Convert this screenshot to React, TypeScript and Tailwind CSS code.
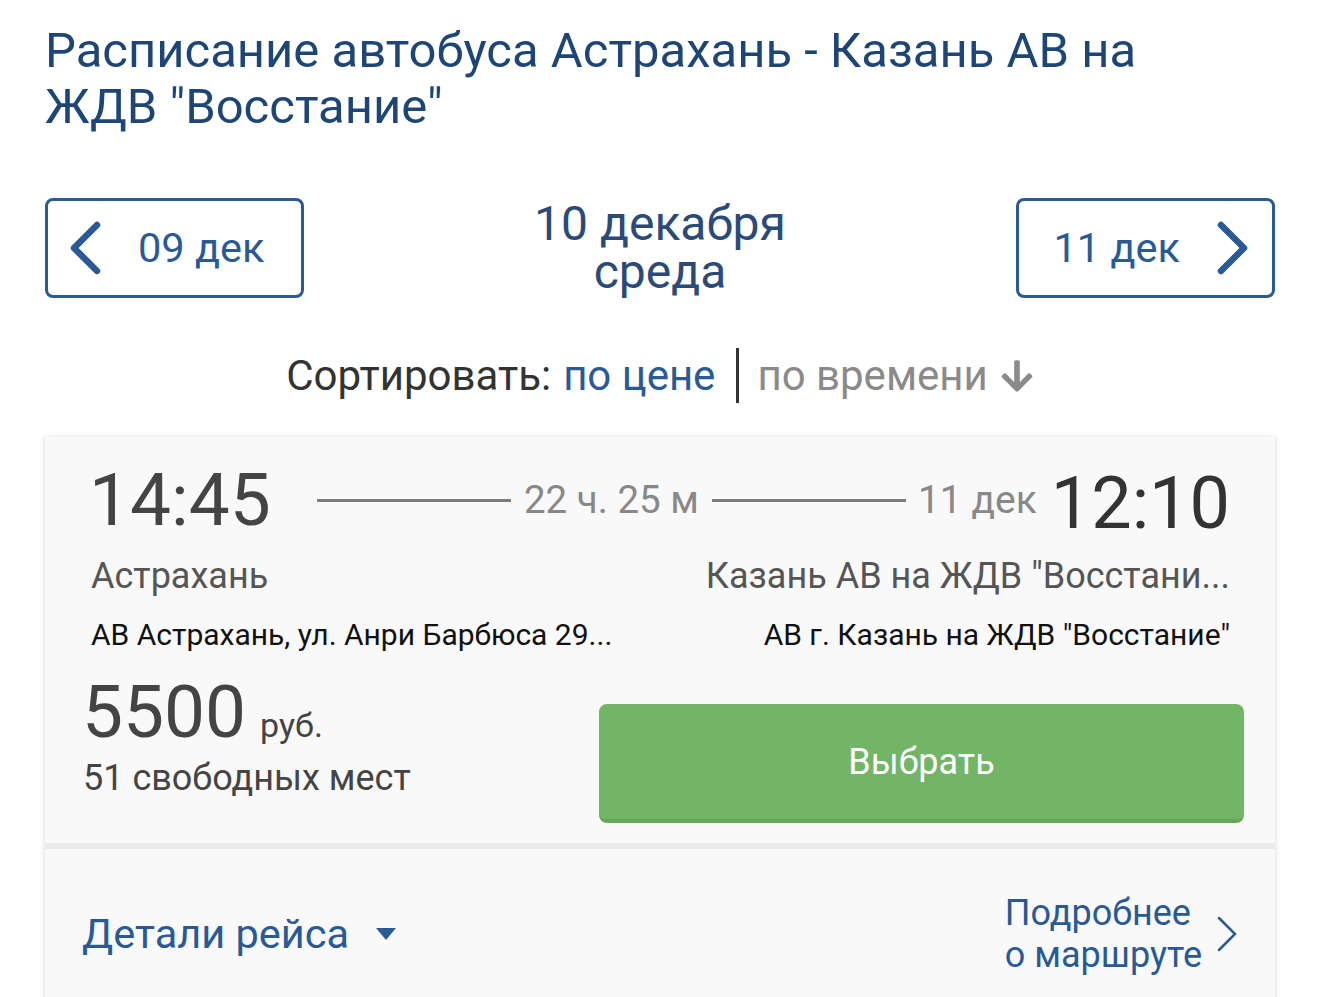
const roboto = { fontFamily: "Roboto, 'Noto Sans', sans-serif" };

function ArrowDown() {
  return (
    <svg viewBox="0 0 448 512" className="w-[34px] h-[36px] fill-[#8a8a8a] ml-[12px]">
      <path d="M413.1 222.5l22.2 22.2c9.4 9.4 9.4 24.6 0 33.9L241 473c-9.4 9.4-24.6 9.4-33.9 0L12.7 278.6c-9.4-9.4-9.4-24.6 0-33.9l22.2-22.2c9.5-9.5 25-9.3 34.3.4L184 343.4V56c0-13.3 10.7-24 24-24h32c13.3 0 24 10.7 24 24v287.4l114.8-120.5c9.3-9.8 24.8-10 34.3-.4z" />
    </svg>
  );
}

function BigChevron({ dir }: { dir: "left" | "right" }) {
  return (
    <svg viewBox="0 0 34 54" className="w-[34px] h-[54px]" fill="none" stroke="#2a5a96" strokeWidth={6.5} strokeLinecap="round" strokeLinejoin="round">
      {dir === "left" ? <polyline points="29,4 6,27 29,50" /> : <polyline points="5,4 28,27 5,50" />}
    </svg>
  );
}

export default function App() {
  return (
    <div className="min-h-screen bg-white px-[45px] pt-[23px] overflow-hidden" style={roboto}>
      <h1 className="max-w-[1170px] text-[49px] leading-[56px] text-[#1d4677] font-normal">
        Расписание автобуса Астрахань - Казань АВ на ЖДВ "Восстание"
      </h1>

      {/* date switcher */}
      <div className="flex items-center justify-between mt-[63px]">
        <button className="w-[259px] h-[100px] border-[3px] border-[#2a5a96] rounded-[8px] flex items-center pl-[20px] text-[#2a5a96]">
          <BigChevron dir="left" />
          <span className="text-[41.5px] ml-[36px]">09 дек</span>
        </button>
        <div className="text-center text-[#2b4a78] text-[48px] leading-[48px]">
          <div>10 декабря</div>
          <div>среда</div>
        </div>
        <button className="w-[259px] h-[100px] border-[3px] border-[#2a5a96] rounded-[8px] flex items-center justify-end pr-[22px] text-[#2a5a96]">
          <span className="text-[41.5px] mr-[36px]">11 дек</span>
          <BigChevron dir="right" />
        </button>
      </div>

      {/* sort */}
      <div className="flex items-center justify-center mt-[50px] h-[55px] text-[42px] leading-[55px]">
        <span className="text-[#333]">Сортировать:</span>
        <span className="text-[#2a5a96] ml-[12px]">по цене</span>
        <span className="w-[3px] h-[55px] bg-[#333] ml-[21px] mr-[18px]" />
        <span className="text-[#8a8a8a]">по времени</span>
        <ArrowDown />
      </div>

      {/* trip card */}
      <div className="mt-[34px] bg-[#f9f9f9] shadow-[0_1px_6px_rgba(0,0,0,0.16)]">
        <div className="pl-[46px] pr-[45px] pt-[26px] pb-[20px]">
          <div className="flex items-center h-[74px]">
            <span className="text-[73px] leading-[74px] text-[#444] -ml-[2px]">14:45</span>
            <span className="flex-1 h-[3px] bg-[#7d7d7d] ml-[46px]" />
            <span className="text-[38.5px] text-[#888] mx-[13px]">22 ч. 25 м</span>
            <span className="flex-1 h-[3px] bg-[#7d7d7d]" />
            <span className="text-[39px] text-[#888] ml-[12px] mr-[14px]">11 дек</span>
            <span className="text-[72px] leading-[74px] text-[#333] pt-[8px]">12:10</span>
          </div>
          <div className="flex justify-between mt-[19px] text-[36px] leading-[40px] text-[#555]">
            <span className="whitespace-nowrap">Астрахань</span>
            <span className="whitespace-nowrap">Казань АВ на ЖДВ "Восстани...</span>
          </div>
          <div className="flex justify-between mt-[22px] text-[30px] leading-[34px] text-[#111]">
            <span className="whitespace-nowrap">АВ Астрахань, ул. Анри Барбюса 29...</span>
            <span className="whitespace-nowrap">АВ г. Казань на ЖДВ "Восстание"</span>
          </div>
          <div className="flex items-start justify-between mt-[24px]">
            <div className="-ml-[9px]">
              <div className="flex items-baseline">
                <span className="text-[73px] leading-[73px] text-[#444]">5500</span>
                <span className="text-[34px] text-[#444] ml-[14px]">руб.</span>
              </div>
              <div className="text-[36px] text-[#444] leading-[40px] mt-[7px] ml-[1px]">51 свободных мест</div>
            </div>
            <button className="w-[645px] h-[119px] mt-[28px] mr-[-14px] rounded-[8px] bg-[#73b566] border-b-[4px] border-[#66a65a] text-white text-[36px]">
              Выбрать
            </button>
          </div>
        </div>
        <div className="h-[6px] bg-[#ebebeb]" />
        <div className="flex items-center justify-between pl-[37px] pr-[37px] pt-[43px] pb-[30px]">
          <div className="flex items-center text-[#2a5a96]">
            <span className="text-[41.5px]">Детали рейса</span>
            <svg viewBox="0 0 20 12" className="w-[22px] h-[12px] ml-[26px] fill-[#2a5a96]">
              <path d="M0 0h20L10 12z" />
            </svg>
          </div>
          <div className="flex items-center text-[#2a5a96]">
            <div className="text-[36px] leading-[42px]">
              <div>Подробнее</div>
              <div>о маршруте</div>
            </div>
            <svg viewBox="0 0 22 38" className="w-[22px] h-[38px] ml-[14px]" fill="none" stroke="#2a5a96" strokeWidth={2.5} strokeLinecap="round">
              <polyline points="3,3 19,19 3,35" />
            </svg>
          </div>
        </div>
      </div>
    </div>
  );
}
